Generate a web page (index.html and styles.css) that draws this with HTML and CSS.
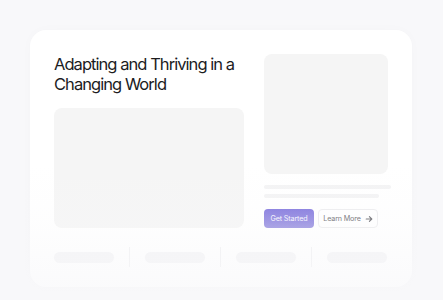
FILE: index.html
```html
<!DOCTYPE html>
<html lang="en">
<head>
    <meta charset="UTF-8">
    <meta name="viewport" content="width=device-width, initial-scale=1.0">
    <title>Adapting and Thriving</title>
    <link rel="stylesheet" href="styles.css">
</head>
<body>
    <div class="page">
        <div class="card">
            <div class="hero">
                <div class="hero-left">
                    <h1>Adapting and Thriving in a<br>Changing World</h1>
                    <div class="media"></div>
                </div>
                <div class="hero-right">
                    <div class="thumb"></div>
                    <div class="line"></div>
                    <div class="line short"></div>
                    <div class="actions">
                        <button class="btn primary">Get Started</button>
                        <button class="btn ghost">Learn More
                            <svg width="8" height="8" viewBox="0 0 10 10" fill="none" stroke="currentColor" stroke-width="1.4" stroke-linecap="round" stroke-linejoin="round">
                                <path d="M1.5 5h7M5.5 2l3 3-3 3"/>
                            </svg>
                        </button>
                    </div>
                </div>
            </div>
            <div class="stats">
                <div class="pill"></div>
                <div class="divider"></div>
                <div class="pill"></div>
                <div class="divider"></div>
                <div class="pill"></div>
                <div class="divider"></div>
                <div class="pill"></div>
            </div>
        </div>
        <!-- bottom fade over the card -->
        <div class="fade"></div>
    </div>
</body>
</html>
```

FILE: styles.css
```css
body {
    font-family: Inter, "Noto Sans", sans-serif;
    background-color: #f8f8fa;
    margin: 0;
    padding: 0;
}
.page {
    position: relative;
    height: 300px;
    padding: 30px 31px 0 30px;
    box-sizing: border-box;
    overflow: hidden;
}
.card {
    background-color: #ffffff;
    border-radius: 16px;
    padding: 24px 24px 20px 24px;
    box-shadow: 0 0 12px rgba(0, 0, 0, 0.02);
}
.hero {
    display: flex;
    gap: 20px;
}
.hero-left {
    width: 190px;
}
.hero-left h1 {
    margin: 0;
    font-size: 16.5px;
    line-height: 20px;
    font-weight: 400;
    letter-spacing: -0.95px;
    white-space: nowrap;
    color: #1c1c1e;
}
.media {
    margin-top: 14px;
    height: 120px;
    background-color: #f5f5f5;
    border-radius: 8px;
}
.hero-right {
    width: 124px;
}
.thumb {
    height: 120px;
    background-color: #f5f5f5;
    border-radius: 8px;
}
.line {
    margin-top: 11px;
    width: 127px;
    height: 4px;
    background-color: #f3f3f4;
    border-radius: 2px;
}
.line.short {
    margin-top: 5px;
    width: 115px;
}
.actions {
    display: flex;
    gap: 4px;
    margin-top: 11px;
}
.btn {
    height: 19px;
    padding: 0;
    font-family: Inter, "Noto Sans", sans-serif;
    font-size: 7.2px;
    letter-spacing: -0.15px;
    white-space: nowrap;
    border-radius: 4px;
    display: flex;
    align-items: center;
    justify-content: center;
    gap: 4px;
    cursor: pointer;
}
.btn.primary {
    width: 50px;
    background: linear-gradient(180deg, #7c70dc, #928ade);
    color: #f6f5ff;
    border: none;
}
.btn.ghost {
    width: 60px;
    background-color: #ffffff;
    color: #636368;
    border: 1px solid #ececee;
}
.stats {
    display: flex;
    align-items: center;
    gap: 15px;
    margin-top: 19px;
    height: 20px;
}
.pill {
    width: 60px;
    height: 11px;
    border-radius: 6px;
    background-color: #f3f3f5;
}
.divider {
    width: 1px;
    height: 20px;
    background-color: #efeff1;
}
.fade {
    position: absolute;
    left: 0;
    top: 0;
    width: 100%;
    height: 100%;
    background: linear-gradient(180deg, rgba(248, 248, 250, 0) 55%, rgba(248, 248, 250, 0.2) 74%, rgba(248, 248, 250, 0.75) 100%);
}
```
